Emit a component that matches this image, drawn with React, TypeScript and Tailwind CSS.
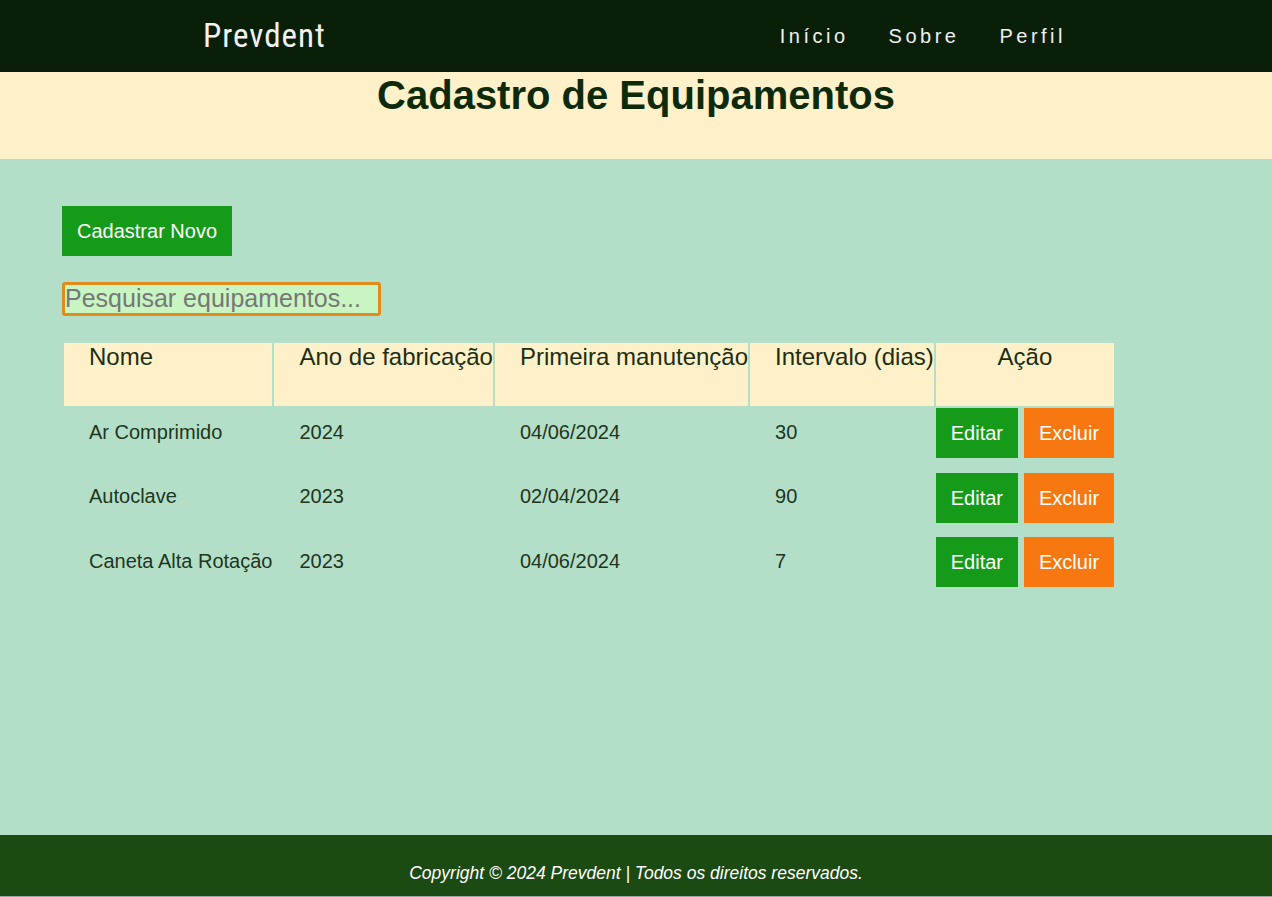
import React from 'react';

interface Equipment {
  nome: string;
  ano: string;
  primeira: string;
  intervalo: string;
}

const equipamentos: Equipment[] = [
  { nome: 'Ar Comprimido', ano: '2024', primeira: '04/06/2024', intervalo: '30' },
  { nome: 'Autoclave', ano: '2023', primeira: '02/04/2024', intervalo: '90' },
  { nome: 'Caneta Alta Rotação', ano: '2023', primeira: '04/06/2024', intervalo: '7' },
];

function Header() {
  return (
    <header className="flex h-[72px] items-center justify-between bg-[#0a1f08] pl-[203px] pr-[206px]">
      <span className="text-[33px] tracking-[1px] text-[#f2f2f2] [font-family:'Roboto_Condensed',Roboto,sans-serif]">
        Prevdent
      </span>
      <nav className="flex items-center gap-[40px] text-[20px] tracking-[3.5px] text-[#f0f0f0]">
        <a href="#">Início</a>
        <a href="#">Sobre</a>
        <a href="#">Perfil</a>
      </nav>
    </header>
  );
}

function Footer() {
  return (
    <footer className="flex flex-col">
      <div className="h-[61px] bg-[#1b4a13] pt-[28px] text-center text-[17.5px] italic leading-[20px] text-white">
        Copyright © 2024 Prevdent | Todos os direitos reservados.
      </div>
      <div className="h-px bg-[#9aa6a2]" />
    </footer>
  );
}

export default function App() {
  return (
    <div className="flex min-h-[897px] flex-col bg-[#b3dfc9] [font-family:'Liberation_Sans',Arial,sans-serif]">
      <Header />

      {/* Title band */}
      <div className="h-[87px] bg-[#fef1c9]">
        <h1 className="text-center text-[40px] font-bold leading-[46px] text-[#0d2a0a]">
          Cadastro de Equipamentos
        </h1>
      </div>

      <main className="flex-1 px-[62px] pt-[47px]">
        <button className="h-[50px] bg-[#169a1a] px-[15px] text-[20px] text-white">
          Cadastrar Novo
        </button>

        <div className="mt-[26px]">
          <input
            type="text"
            placeholder="Pesquisar equipamentos..."
            className="h-[34px] w-[319px] rounded-[3px] border-[3px] border-[#e08b1a] bg-[#c8f5c2] px-0 text-[25px] text-[#333] outline-none placeholder:text-[#777]"
          />
        </div>

        <table className="mt-[25px] border-separate border-spacing-[2px] text-[#1c2e14]">
          <thead>
            <tr className="h-[63px] bg-[#fef1c9] text-[24px] leading-[27px]">
              <th className="whitespace-nowrap pl-[25px] pr-0 pt-0 text-left align-top font-normal">Nome</th>
              <th className="whitespace-nowrap pl-[25px] pr-0 pt-0 text-left align-top font-normal">Ano de fabricação</th>
              <th className="whitespace-nowrap pl-[25px] pr-0 pt-0 text-left align-top font-normal">Primeira manutenção</th>
              <th className="whitespace-nowrap pl-[25px] pr-0 pt-0 text-left align-top font-normal">Intervalo (dias)</th>
              <th className="whitespace-nowrap p-0 pt-0 text-center align-top font-normal">Ação</th>
            </tr>
          </thead>
          <tbody>
            {equipamentos.map((e) => (
              <tr key={e.nome} className="h-[62.5px] text-[20px] text-[#1f3520]">
                <td className="whitespace-nowrap pl-[25px] pt-[12.5px] align-top leading-[23px]">{e.nome}</td>
                <td className="whitespace-nowrap pl-[25px] pt-[12.5px] align-top leading-[23px]">{e.ano}</td>
                <td className="whitespace-nowrap pl-[25px] pt-[12.5px] align-top leading-[23px]">{e.primeira}</td>
                <td className="whitespace-nowrap pl-[25px] pt-[12.5px] align-top leading-[23px]">{e.intervalo}</td>
                <td className="p-0 align-top">
                  <div className="flex gap-[6px]">
                    <button className="h-[50px] bg-[#169a1a] px-[15px] text-[20px] text-white">Editar</button>
                    <button className="h-[50px] bg-[#f77811] px-[15px] text-[20px] text-white">Excluir</button>
                  </div>
                </td>
              </tr>
            ))}
          </tbody>
        </table>
      </main>

      <Footer />
    </div>
  );
}
